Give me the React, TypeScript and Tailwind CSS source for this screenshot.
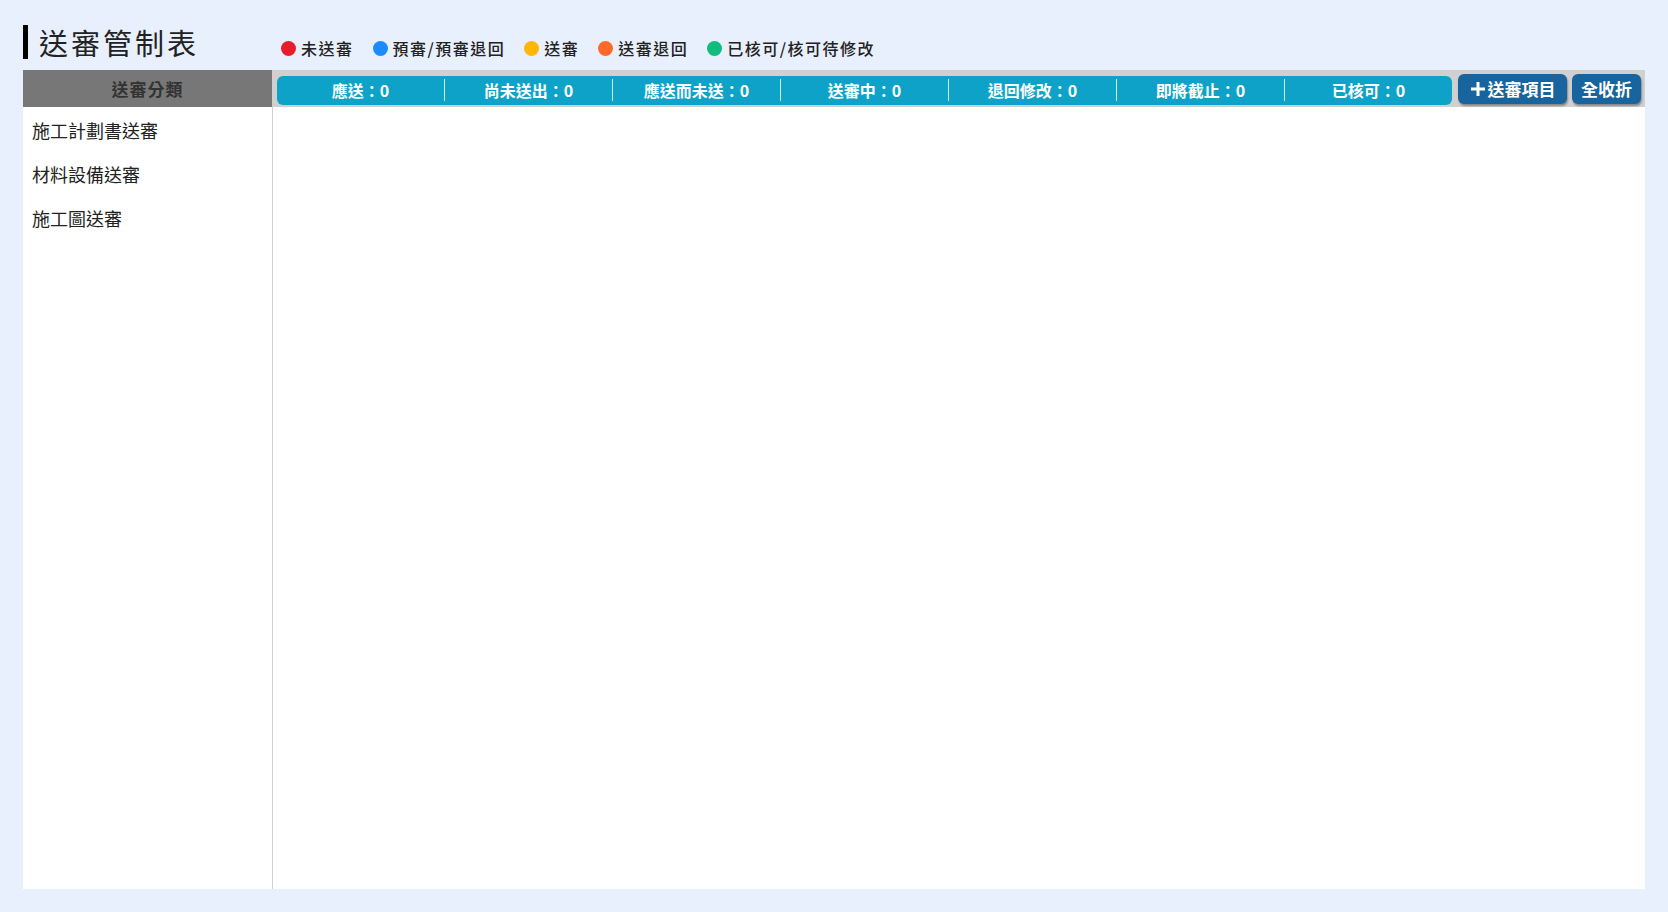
const legend = [
  { color: 'bg-[#e81c2a]', label: '未送審' },
  { color: 'bg-[#1a8cff]', label: '預審/預審退回' },
  { color: 'bg-[#ffb703]', label: '送審' },
  { color: 'bg-[#ff6a2b]', label: '送審退回' },
  { color: 'bg-[#0fbd7e]', label: '已核可/核可待修改' },
]

const stats = ['應送', '尚未送出', '應送而未送', '送審中', '退回修改', '即將截止', '已核可']

const categories = ['施工計劃書送審', '材料設備送審', '施工圖送審']

export default function App() {
  return (
    <div
      className="w-[1668px] h-[912px] bg-[#e8effd] px-[23px] pt-[25px] flex flex-col text-[#222]"
      style={{ fontFamily: '"Noto Sans CJK TC", "Noto Sans", sans-serif' }}
    >
      <div className="flex items-end h-[34px] mb-[11px]">
        <div className="w-[5px] h-[34px] bg-black" />
        <h1 className="ml-[11px] text-[29px] leading-[34px] tracking-[3px] text-[#222] font-normal">送審管制表</h1>
        <div className="ml-[82px] flex items-center gap-[19px]">
          {legend.map((l) => (
            <div key={l.label} className="flex items-center gap-[5px]">
              <span className={`w-[15px] h-[15px] rounded-full ${l.color}`} />
              <span className="text-[16px] leading-[22px] tracking-[1.5px] font-medium text-[#222]">{l.label}</span>
            </div>
          ))}
        </div>
      </div>

      <div className="flex h-[819px] bg-white">
        <div className="w-[250px] flex flex-col border-r border-[#d0d0d0]">
          <div className="h-[37px] bg-[#777777] flex items-center justify-center text-[17px] tracking-[1px] font-bold text-[#333] pt-[1px]">
            送審分類
          </div>
          <div className="flex flex-col pt-[1px]">
            {categories.map((c) => (
              <div key={c} className="h-[44px] flex items-center px-[9px] text-[18px] text-[#222]">
                {c}
              </div>
            ))}
          </div>
        </div>

        <div className="flex-1 flex flex-col">
          <div className="h-[37px] bg-[#d0d0d0] flex items-center pl-[4px] pr-[4px] gap-[6px]">
            <div className="w-[1175px] h-[29px] mt-[3px] rounded-[6px] bg-[#0fa2c8] flex items-center">
              {stats.map((s, i) => (
                <div
                  key={s}
                  className={`flex-1 h-[22px] flex items-center justify-center text-white text-[16px] font-bold ${
                    i < stats.length - 1 ? 'border-r border-white/80' : ''
                  }`}
                >
                  {s}：0
                </div>
              ))}
            </div>
            <button className="w-[109px] h-[30px] mt-[1px] rounded-[6px] bg-[#17649e] text-white text-[17px] font-bold flex items-center justify-center gap-[2px] shadow-[1px_2px_2px_rgba(0,0,0,0.35)]">
              <svg width="16" height="16" viewBox="0 0 16 16">
                <path d="M8 1v14M1 8h14" stroke="white" strokeWidth="3" />
              </svg>
              送審項目
            </button>
            <button className="w-[69px] h-[30px] mt-[1px] rounded-[6px] bg-[#17649e] text-white text-[17px] font-bold flex items-center justify-center shadow-[1px_2px_2px_rgba(0,0,0,0.35)] ml-[-1px]">
              全收折
            </button>
          </div>
          <div className="flex-1" />
        </div>
      </div>
    </div>
  )
}
